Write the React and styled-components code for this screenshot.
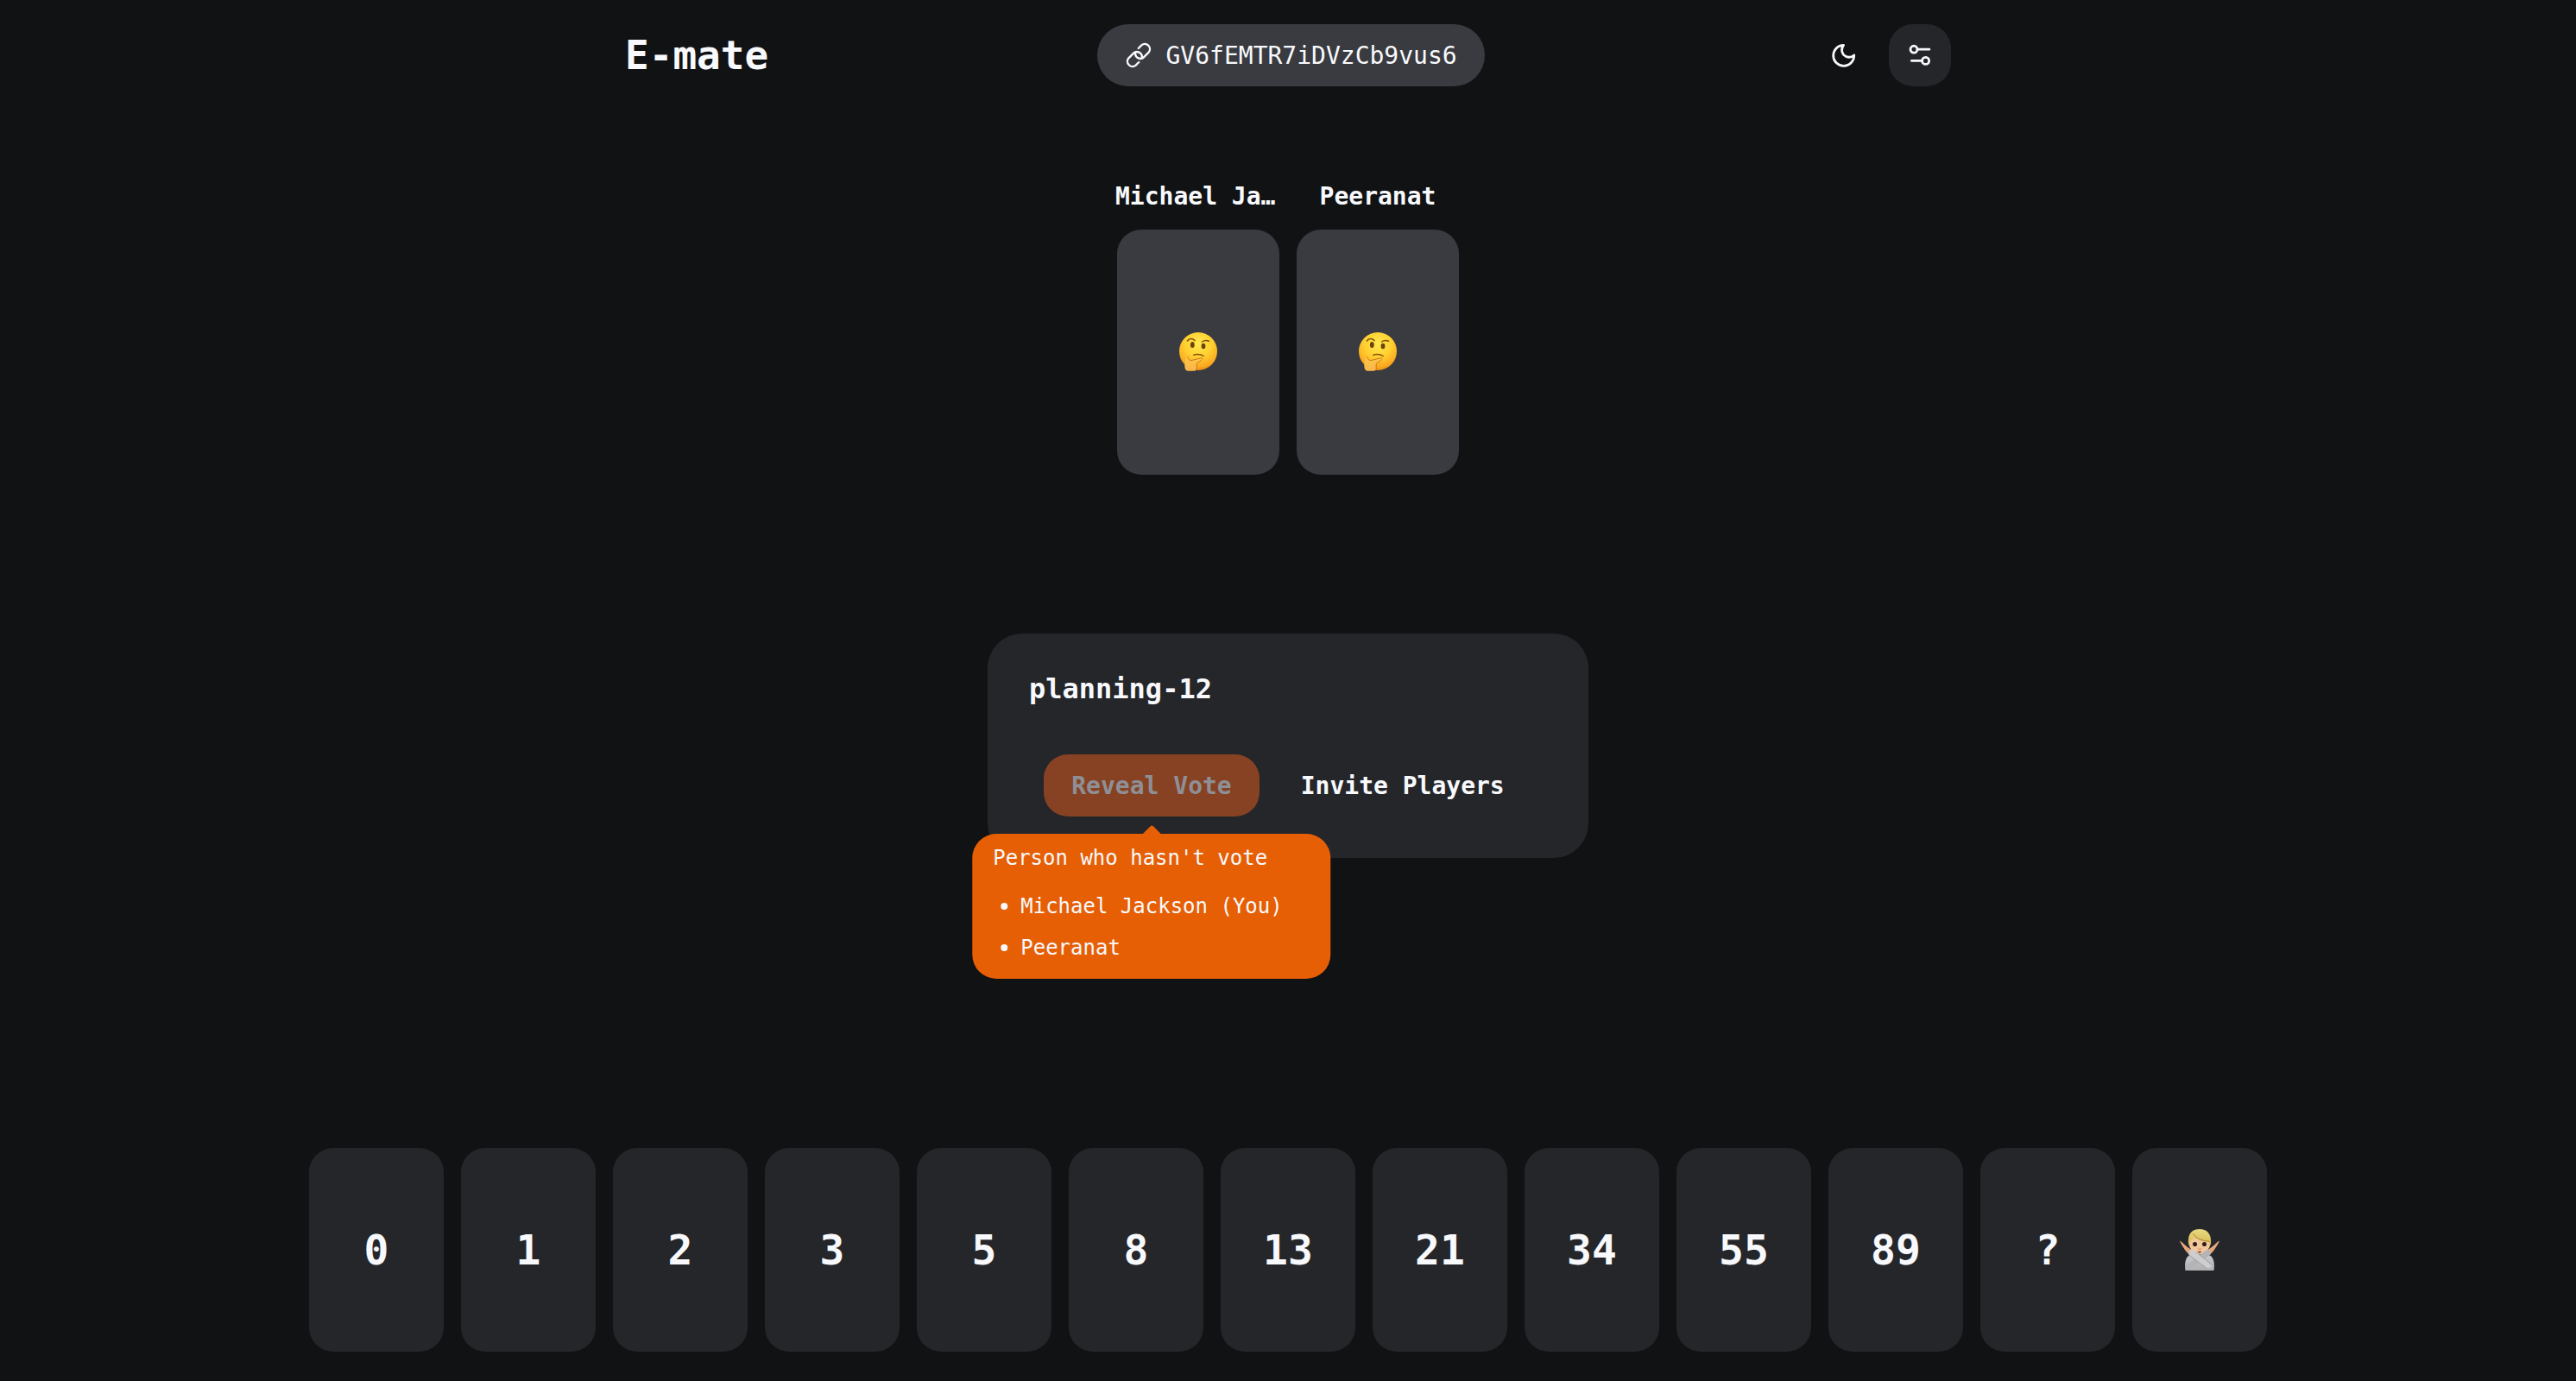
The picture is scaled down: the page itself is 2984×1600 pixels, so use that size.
import React from "react";
import styled, { createGlobalStyle } from "styled-components";

const color = {
  page: "#111214",
  surface: "#25262a",
  raised: "#393b40",
  text: "#f8f9fc",
  accent: "#e65f05",
  accentOff: "#864223",
  textOff: "#8f8f96",
};

const GlobalStyle = createGlobalStyle`
  *, *::before, *::after { box-sizing: border-box; }
  body {
    margin: 0;
    background: ${color.page};
    color: ${color.text};
    font-family: "DejaVu Sans Mono", "Liberation Mono", monospace;
  }
  button { font: inherit; color: inherit; border: 0; padding: 0; background: none; cursor: pointer; }
  h1, h2, p, ul { margin: 0; padding: 0; }
`;

const Page = styled.div`
  min-height: 100vh;
  display: flex;
  flex-direction: column;
`;

const Header = styled.header`
  width: 100%;
  max-width: 1536px;
  height: 128px;
  margin: 0 auto;
  display: flex;
  align-items: center;
  justify-content: space-between;
`;

const Brand = styled.h1`
  font-size: 46px;
  line-height: 64px;
  font-weight: 700;
`;

const RoomButton = styled.button`
  display: flex;
  align-items: center;
  gap: 16px;
  height: 72px;
  padding: 0 32px;
  border-radius: 36px;
  background: ${color.raised};
  font-size: 28px;
`;

const Tools = styled.div`
  display: flex;
  gap: 16px;
`;

const IconButton = styled.button`
  display: grid;
  place-items: center;
  width: 72px;
  height: 72px;
  border-radius: 28px;
  background: ${(p) => (p.$filled ? color.surface : "transparent")};
`;

const Main = styled.main`
  flex: 1;
  display: flex;
  flex-direction: column;
  align-items: center;
  padding: 80px 0 34px;
`;

const Players = styled.ul`
  display: flex;
  gap: 16px;
  list-style: none;
  margin-bottom: 184px;
`;

const Player = styled.li`
  width: 192px;
  display: flex;
  flex-direction: column;
  align-items: center;
  gap: 18px;
`;

const PlayerName = styled.p`
  width: 100%;
  font-size: 28px;
  line-height: 40px;
  font-weight: 700;
  text-align: center;
  white-space: nowrap;
  overflow: hidden;
  text-overflow: ellipsis;
`;

const PlayerCard = styled.div`
  display: grid;
  place-items: center;
  width: 188px;
  height: 284px;
  border-radius: 28px;
  background: ${color.raised};
`;

const Panel = styled.section`
  width: 696px;
  padding: 48px;
  border-radius: 40px;
  background: ${color.surface};
`;

const PanelTitle = styled.h2`
  font-size: 32px;
  line-height: 32px;
  font-weight: 700;
`;

const Actions = styled.div`
  display: flex;
  justify-content: center;
  gap: 16px;
  margin-top: 60px;
`;

const TooltipAnchor = styled.div`
  position: relative;
`;

const ActionButton = styled.button`
  height: 72px;
  padding: 0 32px;
  border-radius: 28px;
  font-size: 28px;
  font-weight: 700;
  white-space: nowrap;

  &:disabled {
    background: ${color.accentOff};
    color: ${color.textOff};
    cursor: default;
  }
`;

const Tooltip = styled.div`
  position: absolute;
  top: calc(100% + 20px);
  left: 50%;
  transform: translateX(-50%);
  width: max-content;
  padding: 12px 24px;
  border-radius: 28px;
  background: ${color.accent};
  font-size: 24px;
  line-height: 32px;

  &::before {
    content: "";
    position: absolute;
    left: 50%;
    top: -7px;
    width: 16px;
    height: 16px;
    margin-left: -8px;
    border-radius: 2px;
    background: ${color.accent};
    transform: rotate(45deg);
  }
`;

const Waiting = styled.ul`
  list-style: none;
  margin-top: 16px;
`;

const WaitingItem = styled.li`
  display: flex;
  align-items: center;
  gap: 15px;
  padding: 0 32px 0 9px;
  line-height: 48px;

  &::before {
    content: "";
    width: 8px;
    height: 8px;
    border-radius: 50%;
    background: ${color.text};
  }
`;

const Deck = styled.div`
  display: flex;
  justify-content: center;
  gap: 20px;
  margin-top: auto;
`;

const DeckCard = styled.button`
  display: grid;
  place-items: center;
  width: 156px;
  height: 236px;
  border-radius: 28px;
  background: ${color.surface};
  font-size: 48px;
  font-weight: 700;
`;

const LinkIcon = () => (
  <svg width="32" height="32" viewBox="0 0 24 24" fill="none" stroke="currentColor" strokeWidth="1.8" strokeLinecap="round" strokeLinejoin="round" aria-hidden="true">
    <path d="M11.8 6 14.5 3.3A4.4 4.4 0 0 1 20.7 9.5L16.6 13.6A4.4 4.4 0 0 1 9.1 10.300" />
    <path d="M12.2 18 9.5 20.7A4.4 4.4 0 0 1 3.3 14.5L7.4 10.4A4.4 4.4 0 0 1 14.9 13.700" />
  </svg>
);

const MoonIcon = () => (
  <svg width="32" height="32" viewBox="0 0 32 32" fill="none" stroke="currentColor" strokeWidth="2.8" strokeLinecap="round" strokeLinejoin="round" aria-hidden="true">
    <path d="M15.6 4.4A12 12 0 1 0 27.7 15.9C24.6 19.2 18.8 19 15.5 15.4C12.9 12.4 12.9 7.6 15.6 4.4Z" />
  </svg>
);

const SlidersIcon = () => (
  <svg width="32" height="32" viewBox="0 0 32 32" fill="none" stroke="currentColor" strokeWidth="2.8" strokeLinecap="round" aria-hidden="true">
    <circle cx="9" cy="9.2" r="4" />
    <path d="M13.2 9.2H26.8" />
    <circle cx="22.6" cy="22.4" r="4" />
    <path d="M18.4 22.4H6.4" />
  </svg>
);

const ThinkingFace = () => (
  <svg width="46" height="48" viewBox="0 0 46 48" role="img" aria-label="Thinking">
    <defs>
      <radialGradient id="face" cx="0.5" cy="0.3" r="0.72">
        <stop offset="0" stopColor="#ffe84e" />
        <stop offset="0.5" stopColor="#ffcf30" />
        <stop offset="0.85" stopColor="#fba81f" />
        <stop offset="1" stopColor="#e68a12" />
      </radialGradient>
      <linearGradient id="hand" x1="0" y1="0" x2="0" y2="1">
        <stop offset="0" stopColor="#ffc848" />
        <stop offset="1" stopColor="#f9b44a" />
      </linearGradient>
    </defs>
    <circle cx="23" cy="23" r="22" fill="url(#face)" />
    <g fill="none" stroke="#85500c" strokeLinecap="round">
      <path d="M10.5 11C12.5 8 16.5 7.7 19 10.5" strokeWidth="1.6" />
      <path d="M27.5 12C29.5 10.5 33 10.3 35.5 11.3" strokeWidth="1.5" />
      <path d="M17.5 27.3C21.5 26 26 26.5 29.5 28.5" strokeWidth="1.3" />
    </g>
    <ellipse cx="16.3" cy="15.5" rx="2.4" ry="3.5" fill="#6e430b" />
    <ellipse cx="29" cy="17" rx="2.4" ry="3.3" fill="#6e430b" />
    <path d="M9.5 29C8.5 31 8 34 7.500 37C7 41 7.5 45.5 11 45.7H18.5C20.5 45.7 21 44.500 21 42.5V38C21.5 36.5 24 35.5 26.5 33.5C28.5 32 28.5 30.5 26.5 30.7L17.5 33C14.5 34 12.500 33.5 12 31.5C11.7 30 10.5 28 9.5 29Z" fill="url(#hand)" />
    <path d="M10.8 29.5C11.5 33 13.5 34.3 17.5 33L26.5 30.7C28.5 30.5 28 32.3 26.5 33.5L21.2 37.3V44.5" fill="none" stroke="#c9781a" strokeWidth="1" strokeLinecap="round" />
  </svg>
);

const NoGoodPerson = () => (
  <svg width="48" height="50" viewBox="0 0 48 50" role="img" aria-label="Skip this vote">
    <defs>
      <linearGradient id="hair" x1="0" y1="0" x2="0" y2="1">
        <stop offset="0" stopColor="#e9da80" />
        <stop offset="1" stopColor="#d3b24c" />
      </linearGradient>
      <linearGradient id="shirt" x1="0" y1="0" x2="0" y2="1">
        <stop offset="0" stopColor="#c9c9cc" />
        <stop offset="1" stopColor="#b0b0b3" />
      </linearGradient>
    </defs>
    <path d="M7.500 49C6.5 42 7 34.5 12 31.5H36C41 34.5 41.5 42 40.5 49Z" fill="url(#shirt)" />
    <path d="M11 18C10 7 15 1 24 1S38 7 37 18L35 23H13Z" fill="url(#hair)" />
    <path d="M0.800 14.500C3.500 15.500 7 20 11.500 23L15.500 25.500L13 31C9 28.500 4.500 22 0.800 14.500ZM47.200 14.500C44.500 15.500 41 20 36.500 23L32.500 25.500L35 31C39 28.500 43.500 22 47.200 14.500Z" fill="#e5a87c" />
    <path d="M12.5 15C15 14.5 17 12.500 17.500 10.500C22.500 14.500 29 16 35.5 15.5V19C35 26 30.500 30.5 24 30.5S13 26 12.5 19Z" fill="#f2c79c" />
    <path d="M16.500 6C18.500 11 26 14.5 35.5 15.5" fill="none" stroke="#a88730" strokeWidth="1" />
    <circle cx="18.5" cy="18.5" r="2.500" fill="#2e1d13" />
    <circle cx="29.5" cy="18.500" r="2.500" fill="#2e1d13" />
    <path d="M22 23.5Q24 25 26 23.5" fill="none" stroke="#d7956b" strokeWidth="1.2" />
    <path d="M21.5 26.800H26.5L24 29Z" fill="#8c3028" />
    <path d="M33 24.500C35.500 25 37 27.500 36.500 30.500L14 47L8.500 43.500L27.500 28.500Z" fill="#b4b4b8" />
    <path d="M15 24.500C12.500 25 11 27.500 11.500 31L33 47L39.500 43.500L20 27.500Z" fill="#cdcdd0" />
    <path d="M11.500 31L33 47M20 27.500L39.500 43.500" fill="none" stroke="#98989d" strokeWidth="0.9" />
  </svg>
);

const players = [
  { id: 1, name: "Michael Jackson", you: true },
  { id: 2, name: "Peeranat", you: false },
];

const deck = ["0", "1", "2", "3", "5", "8", "13", "21", "34", "55", "89", "?"];

export default function App() {
  return (
    <Page>
      <GlobalStyle />
      <Header>
        <Brand>E-mate</Brand>
        <RoomButton type="button">
          <LinkIcon />
          <span>GV6fEMTR7iDVzCb9vus6</span>
        </RoomButton>
        <Tools>
          <IconButton type="button" aria-label="Toggle theme">
            <MoonIcon />
          </IconButton>
          <IconButton type="button" aria-label="Settings" $filled>
            <SlidersIcon />
          </IconButton>
        </Tools>
      </Header>
      <Main>
        <Players>
          {players.map((player) => (
            <Player key={player.id}>
              <PlayerName>{player.name}</PlayerName>
              <PlayerCard>
                <ThinkingFace />
              </PlayerCard>
            </Player>
          ))}
        </Players>
        <Panel>
          <PanelTitle>planning-12</PanelTitle>
          <Actions>
            <TooltipAnchor>
              <ActionButton type="button" disabled aria-describedby="waiting">
                Reveal Vote
              </ActionButton>
              <Tooltip role="tooltip" id="waiting">
                <p>Person who hasn't vote</p>
                <Waiting>
                  {players.map((player) => (
                    <WaitingItem key={player.id}>
                      {player.you ? `${player.name} (You)` : player.name}
                    </WaitingItem>
                  ))}
                </Waiting>
              </Tooltip>
            </TooltipAnchor>
            <ActionButton type="button">Invite Players</ActionButton>
          </Actions>
        </Panel>
        <Deck>
          {deck.map((value) => (
            <DeckCard type="button" key={value}>
              {value}
            </DeckCard>
          ))}
          <DeckCard type="button">
            <NoGoodPerson />
          </DeckCard>
        </Deck>
      </Main>
    </Page>
  );
}
